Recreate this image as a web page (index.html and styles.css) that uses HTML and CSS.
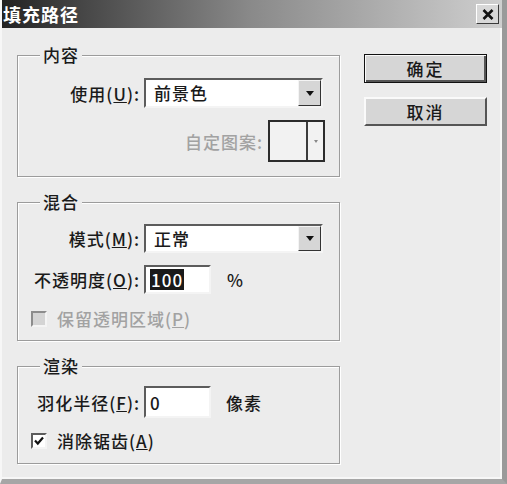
FILE: index.html
```html
<!DOCTYPE html>
<html lang="zh-CN">
<head>
    <meta charset="UTF-8">
    <title>填充路径</title>
    <link rel="stylesheet" href="styles.css">
</head>
<body>
    <div class="dialog">
        <div class="titlebar">
            <span class="title">填充路径</span>
            <span class="close">
                <svg width="12" height="11" viewBox="0 0 12 11">
                    <path d="M1.5 1 L10.5 10 M10.5 1 L1.5 10" stroke="#111" stroke-width="2.6"/>
                </svg>
            </span>
        </div>

        <div class="main">
            <div class="groups">
                <fieldset class="group groupContent">
                    <legend>内容</legend>
                    <div class="fields">
                        <span class="label">使用(<u>U</u>):</span>
                        <div class="select">
                            <span class="selectText">前景色</span>
                            <span class="arrowBtn"><span class="tri"></span></span>
                        </div>
                        <div class="patternRow">
                            <span class="label disabled">自定图案:</span>
                            <div class="pattern">
                                <span class="patternSwatch"></span>
                                <span class="patternArrow"><span class="triSmall"></span></span>
                            </div>
                        </div>
                    </div>
                </fieldset>

                <fieldset class="group groupBlend">
                    <legend>混合</legend>
                    <div class="fields">
                        <span class="label">模式(<u>M</u>):</span>
                        <div class="select short">
                            <span class="selectText">正常</span>
                            <span class="arrowBtn"><span class="tri"></span></span>
                        </div>
                        <span class="label">不透明度(<u>O</u>):</span>
                        <div class="inputLine">
                            <div class="input"><span class="selected">100</span></div>
                            <span class="unit unitPct">%</span>
                        </div>
                        <div class="checkRow disabled">
                            <span class="checkbox off"></span>
                            <span>保留透明区域(<u>P</u>)</span>
                        </div>
                    </div>
                </fieldset>

                <fieldset class="group groupRender">
                    <legend>渲染</legend>
                    <div class="fields">
                        <span class="label">羽化半径(<u>F</u>):</span>
                        <div class="inputLine">
                            <div class="input tall"><span>0</span></div>
                            <span class="unit">像素</span>
                        </div>
                        <div class="checkRow">
                            <span class="checkbox">
                                <svg width="12" height="12" viewBox="0 0 12 12">
                                    <path d="M2 5.5 L4.8 8.5 L10 2.5" fill="none" stroke="#111" stroke-width="2.2"/>
                                </svg>
                            </span>
                            <span>消除锯齿(<u>A</u>)</span>
                        </div>
                    </div>
                </fieldset>
            </div>

            <div class="actions">
                <button class="btn btnDefault">确定</button>
                <button class="btn">取消</button>
            </div>
        </div>
    </div>
</body>
</html>
```

FILE: styles.css
```css
* {
    box-sizing: border-box;
}
body {
    margin: 0;
    background: #ececec;
    font-family: "Noto Sans CJK SC", "Liberation Sans", sans-serif;
}
.dialog {
    width: 507px;
    height: 484px;
    background: #ececec;
    color: #1a1a1a;
    font-size: 17px;
    font-weight: 500;
    letter-spacing: 1px;
    border-left: 2px solid #f7f7f7;
    border-right: 5px solid #9a9a9a;
    border-bottom: 5px solid #a6a6a6;
    box-shadow: inset -2px -2px 0 #f7f7f7;
}
.titlebar {
    height: 28px;
    display: flex;
    align-items: center;
    justify-content: space-between;
    padding: 0 3px 0 1px;
    background: linear-gradient(to right, #222 0%, #444 15%, #8a8a8a 50%, #cfcfcf 100%);
}
.title {
    color: #fff;
    font-weight: bold;
    font-size: 18px;
    letter-spacing: 1px;
}
.close {
    width: 23px;
    height: 20px;
    display: flex;
    align-items: center;
    justify-content: center;
    background: #d8d8d8;
    border: 1px solid;
    border-color: #fff #3a3a3a #3a3a3a #fff;
}

.main {
    display: flex;
    gap: 24px;
    padding: 18px 0 0 15px;
}
.groups {
    width: 323px;
    display: flex;
    flex-direction: column;
    gap: 16px;
}
.group {
    margin: 0;
    padding: 14px 14px 14px 13px;
    border: 1px solid #9c9c9c;
    box-shadow: 1px 1px 0 #fff, inset 1px 1px 0 #fff;
}
.group legend {
    margin-left: 9px;
    padding: 0 3px;
    line-height: 18px;
    background: #ececec;
}
.groupBlend {
    padding-top: 13px;
    padding-bottom: 9px;
}
.groupRender {
    padding-top: 11px;
    padding-bottom: 10px;
}

.fields {
    display: grid;
    grid-template-columns: 109px 1fr;
    column-gap: 4px;
    row-gap: 12px;
    align-items: center;
}
.groupBlend .fields {
    row-gap: 12px;
}
.groupRender .fields {
    row-gap: 10px;
}
.label {
    text-align: right;
    white-space: nowrap;
}
.disabled {
    color: #a2a2a2;
}

.select {
    width: 179px;
    height: 30px;
    display: flex;
    align-items: stretch;
    background: #fff;
    border: 2px solid;
    border-color: #5c5c5c #f4f4f4 #f4f4f4 #5c5c5c;
}
.select.short {
    height: 29px;
}
.selectText {
    flex: 1;
    padding-left: 8px;
    line-height: 25px;
}
.arrowBtn {
    width: 23px;
    display: flex;
    align-items: center;
    justify-content: center;
    background: #d6d6d6;
    border: 1px solid;
    border-color: #f4f4f4 #333 #333 #f4f4f4;
}
.tri {
    width: 0;
    height: 0;
    border-left: 4px solid transparent;
    border-right: 4px solid transparent;
    border-top: 5px solid #111;
}

.patternRow {
    grid-column: 1 / 3;
    display: flex;
    align-items: center;
    justify-content: flex-end;
    gap: 5px;
}
.pattern {
    width: 57px;
    height: 42px;
    display: flex;
    border: 2px solid #2c2c2c;
    background: #f2f2f2;
}
.patternSwatch {
    flex: 1;
    border-right: 2px solid #3c3c3c;
}
.patternArrow {
    width: 15px;
    display: flex;
    align-items: center;
    justify-content: center;
}
.triSmall {
    width: 0;
    height: 0;
    border-left: 2px solid transparent;
    border-right: 2px solid transparent;
    border-top: 3px solid #888;
}

.inputLine {
    display: flex;
    align-items: center;
}
.input {
    width: 67px;
    height: 29px;
    display: flex;
    align-items: center;
    padding-left: 4px;
    background: #fff;
    border: 2px solid;
    border-color: #5c5c5c #f4f4f4 #f4f4f4 #5c5c5c;
}
.input.tall {
    height: 32px;
}
.selected {
    background: #1a1a1a;
    color: #fff;
    padding: 0 1px;
    line-height: 21px;
}
.unit {
    margin-left: 15px;
}
.unitPct {
    margin-left: 16px;
}

.checkRow {
    grid-column: 1 / 3;
    display: flex;
    align-items: center;
    gap: 10px;
}
.checkbox {
    width: 16px;
    height: 16px;
    display: flex;
    align-items: center;
    justify-content: center;
    background: #fff;
    border: 2px solid;
    border-color: #5c5c5c #f4f4f4 #f4f4f4 #5c5c5c;
}
.checkbox.off {
    background: #d4d4d4;
    border-color: #8c8c8c #f4f4f4 #f4f4f4 #8c8c8c;
}

.actions {
    display: flex;
    flex-direction: column;
    gap: 14px;
    margin-top: 8px;
}
.btn {
    width: 123px;
    height: 29px;
    font-family: inherit;
    font-size: 17px;
    font-weight: 500;
    letter-spacing: 2px;
    color: #1a1a1a;
    background: #d6d6d6;
    border: 2px solid;
    border-color: #fafafa #555 #555 #fafafa;
    padding: 0;
}
.btnDefault {
    border: 1px solid #111;
    box-shadow: inset 1px 1px 0 #fafafa, inset -2px -2px 0 #555;
}
```
